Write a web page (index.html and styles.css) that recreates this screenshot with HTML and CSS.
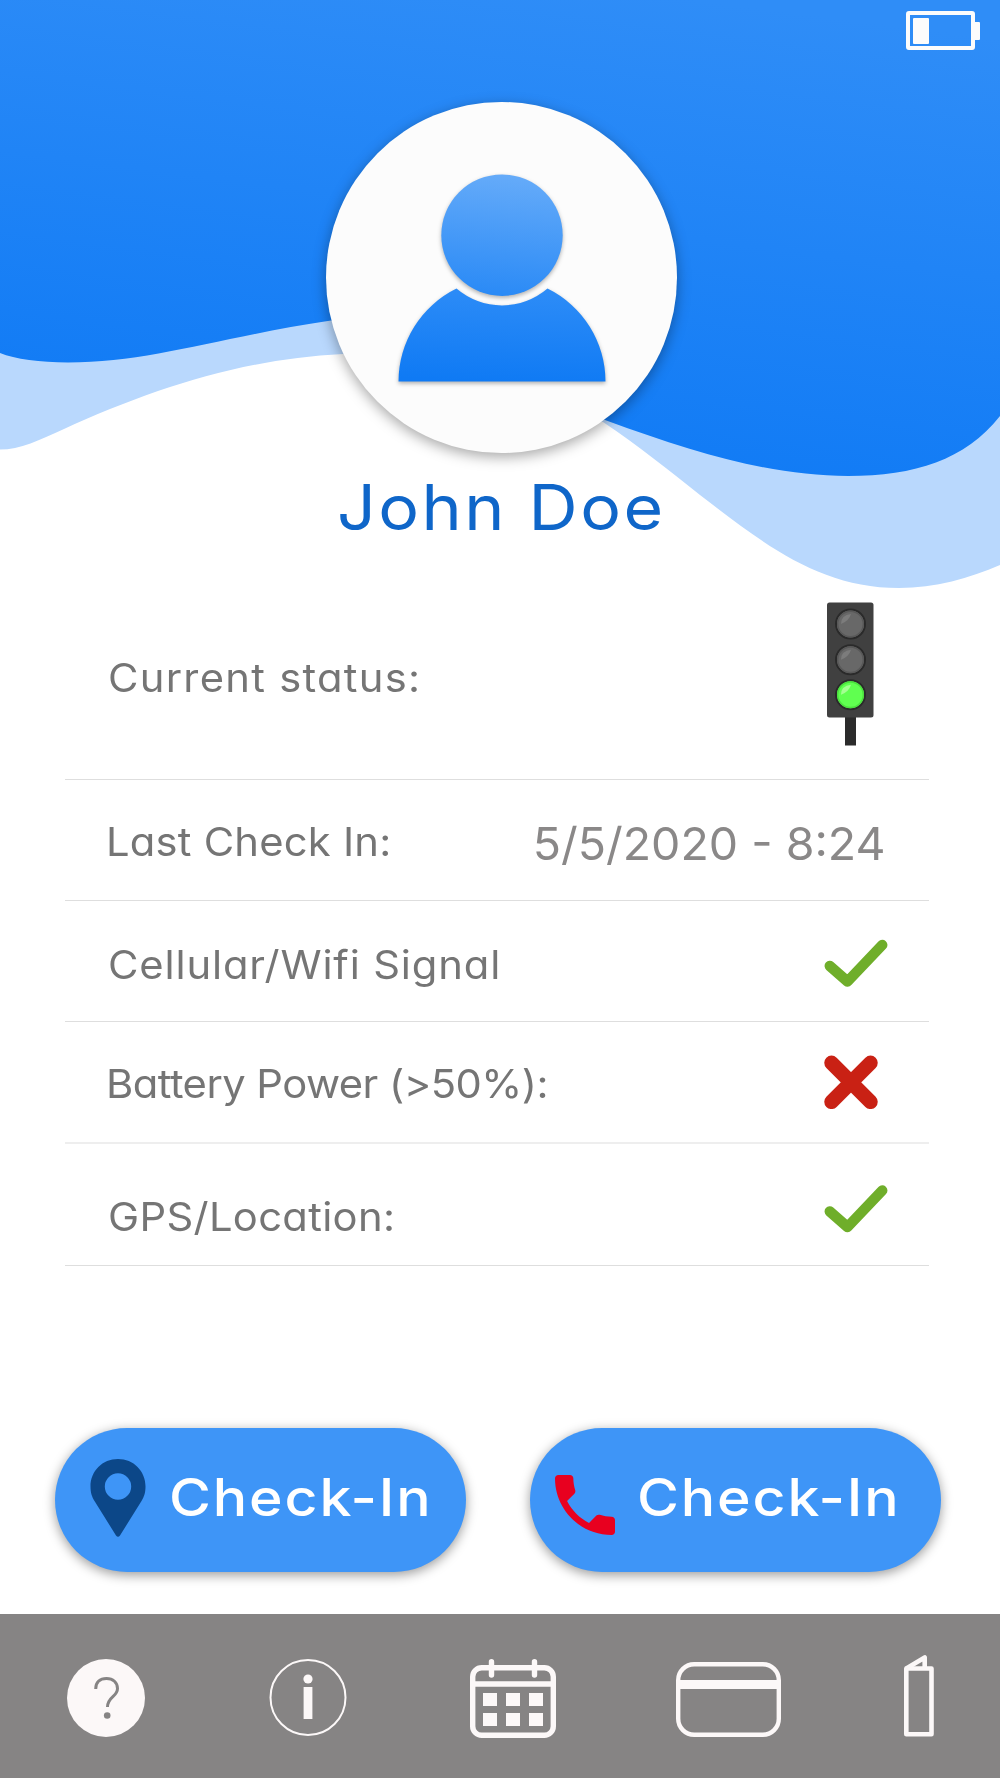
FILE: index.html
```html
<!DOCTYPE html>
<html lang="en">
<head>
  <meta charset="UTF-8">
  <title>Check-In</title>
  <meta name="viewport" content="width=device-width, initial-scale=1.0">
  <link rel="stylesheet" href="styles.css">
</head>
<body>

  <header class="hero">
    <svg class="waves" viewBox="0 0 1000 600" width="1000" height="600">
      <defs>
        <linearGradient id="sky" gradientUnits="userSpaceOnUse" x1="540" y1="-20" x2="480" y2="450">
          <stop offset="0" stop-color="#2f8df7"/>
          <stop offset="1" stop-color="#117bf5"/>
        </linearGradient>
      </defs>
      <path fill="#b9d8fd" d="M0 300V449.600C20 449.600 40 440 64 429C150 390 240 359 343 354L603 422C640 447 670 471 700 495C765 545 820 588 899 588C935 588 970 578 1000 565V300Z"/>
      <path fill="url(#sky)" d="M0 0H1000V416C965 460 915 476 848 476C775 476 700 455 605 420L331 320.500C220 337 150 362.500 68 362.500C40 362.500 15 359 0 353Z"/>
    </svg>

    <svg class="battery" viewBox="0 0 74 39" width="74" height="39">
      <rect x="2" y="2" width="65" height="35" rx="1" fill="none" stroke="#fcfcfc" stroke-width="4"/>
      <rect x="7" y="7" width="16" height="26" rx="1" fill="#fcfcfc"/>
      <rect x="68" y="11" width="6" height="18" rx="1" fill="#fcfcfc"/>
    </svg>

    <div class="avatar">
      <svg class="person" viewBox="0 0 208 208" width="208" height="208">
        <defs>
          <linearGradient id="head" x1="0.55" y1="0" x2="0.45" y2="1">
            <stop offset="0" stop-color="#65abf9"/>
            <stop offset="1" stop-color="#2a8af6"/>
          </linearGradient>
          <linearGradient id="torso" x1="0.55" y1="0" x2="0.45" y2="1">
            <stop offset="0" stop-color="#2d8cf7"/>
            <stop offset="1" stop-color="#0f7af4"/>
          </linearGradient>
        </defs>
        <path fill="url(#torso)" d="M0.500 207.500A103.500 103.500 0 0 1 58.500 114.600A70 70 0 0 0 149.500 114.600A103.500 103.500 0 0 1 207.500 207.500Z"/>
        <circle fill="url(#head)" cx="104" cy="61.200" r="60.700"/>
      </svg>
    </div>

    <h1 class="name">John Doe</h1>
  </header>

  <main>
    <ul class="status-list">
      <li class="row row-status">
        <span class="label">Current status:</span>
        <svg class="traffic" viewBox="0 0 47 144" width="47" height="144">
          <rect x="18" y="112" width="11" height="31.500" fill="#2b2b2b"/>
          <rect x="0" y="0.500" width="46.500" height="115" rx="2.500" fill="#404040"/>
          <g fill="#686868" stroke="#2a2a2a" stroke-width="2">
            <circle cx="23.500" cy="22" r="14.500"/>
            <circle cx="23.500" cy="57.700" r="14.500"/>
            <circle cx="23.500" cy="92.700" r="14.500" fill="#60ff50"/>
          </g>
          <g fill="none" stroke="#585858" stroke-width="1.500">
            <circle cx="23.500" cy="22" r="12.800"/>
            <circle cx="23.500" cy="57.700" r="12.800"/>
            <circle cx="23.500" cy="92.700" r="12.800" stroke="#4be03e"/>
          </g>
          <g fill="#7c7c7c">
            <path d="M14 22Q14 13 24 12Q22 19 14 22Z"/>
            <path d="M14 57.700Q14 48.700 24 47.700Q22 54.700 14 57.700Z"/>
            <path fill="#a4ff92" d="M14 92.700Q14 83.700 24 82.700Q22 89.700 14 92.700Z"/>
          </g>
        </svg>
      </li>
      <li class="row row-checkin">
        <span class="label">Last Check In:</span>
        <span class="date">5/5/2020 - 8:24</span>
      </li>
      <li class="row row-signal">
        <span class="label">Cellular/Wifi Signal</span>
        <svg class="check" viewBox="0 0 64 48" width="64" height="48">
          <path d="M5.800 27L23.500 42.500L58.200 6"/>
        </svg>
      </li>
      <li class="row row-battery">
        <span class="label">Battery Power (&gt;50%):</span>
        <svg class="cross" viewBox="0 0 54 54" width="54" height="54">
          <path d="M7.500 7.800L46.500 46.800M46.500 7.800L7.500 46.800"/>
        </svg>
      </li>
      <li class="row row-gps">
        <span class="label">GPS/Location:</span>
        <svg class="check" viewBox="0 0 64 48" width="64" height="48">
          <path d="M5.800 26.500L23.500 42L58.200 5.500"/>
        </svg>
      </li>
    </ul>

    <div class="actions">
      <button class="btn btn-location">
        <svg viewBox="0 0 56 78" width="56" height="78">
          <path fill="#0c4788" fill-rule="evenodd" d="M28 0C12.500 0 0.500 12 0.500 27.500C0.500 34 2 38 4.500 42L26 76.500Q28 79 30 76.500L51.500 42C54 38 55.500 34 55.500 27.500C55.500 12 43.500 0 28 0ZM28 14.300A13.200 13.200 0 1 1 28 40.700A13.200 13.200 0 1 1 28 14.300Z"/>
        </svg>
        <span>Check-In</span>
      </button>
      <button class="btn btn-call">
        <svg viewBox="3 3 18 18" width="60" height="60">
          <path fill="#e8001f" d="M6.620 10.790c1.440 2.830 3.760 5.140 6.590 6.590l2.200-2.200c.27-.27.67-.36 1.020-.24 1.120.37 2.330.57 3.570.57.550 0 1 .45 1 1V20c0 .55-.45 1-1 1-9.390 0-17-7.610-17-17 0-.55.45-1 1-1h3.500c.55 0 1 .45 1 1 0 1.250.2 2.450.57 3.570.11.350.03.740-.25 1.020l-2.200 2.200z"/>
        </svg>
        <span>Check-In</span>
      </button>
    </div>
  </main>

  <nav class="tabbar">
    <a class="tab tab-help">
      <svg viewBox="0 0 78 78" width="78" height="78">
        <circle cx="39" cy="39" r="39" fill="#fcf8f8"/>
        <path d="M28.700 30C28.700 23 33 19.500 39.500 19.500C46 19.500 50.500 23.500 50.500 29.500C50.500 38 40.500 37.500 40.500 48" fill="none" stroke="#868484" stroke-width="3"/>
        <circle cx="40.200" cy="56.500" r="3.300" fill="#868484"/>
      </svg>
    </a>
    <a class="tab tab-info">
      <svg viewBox="0 0 78 78" width="78" height="78">
        <circle cx="39" cy="38.500" r="37.500" fill="none" stroke="#fcf8f8" stroke-width="2"/>
        <circle cx="39" cy="20" r="4.600" fill="#fcf8f8"/>
        <rect x="34.600" y="28" width="8.800" height="32" fill="#fcf8f8"/>
      </svg>
    </a>
    <a class="tab tab-calendar">
      <svg viewBox="0 0 86 79" width="86" height="79">
        <g fill="none" stroke="#fcf8f8" stroke-width="5.400">
          <rect x="2.700" y="8.700" width="80.600" height="67.600" rx="9"/>
          <path d="M3 25H83"/>
          <path d="M21.500 2.700V16M64.500 2.700V16" stroke-linecap="round"/>
        </g>
        <g fill="#fcf8f8">
          <rect x="13" y="34" width="14" height="13"/>
          <rect x="36" y="34" width="14" height="13"/>
          <rect x="59" y="34" width="14" height="13"/>
          <rect x="13" y="54" width="14" height="13"/>
          <rect x="36" y="54" width="14" height="13"/>
          <rect x="59" y="54" width="14" height="13"/>
        </g>
      </svg>
    </a>
    <a class="tab tab-card">
      <svg viewBox="0 0 105 75" width="105" height="75">
        <rect x="2.200" y="2.200" width="100.600" height="70.600" rx="16" fill="none" stroke="#fcf8f8" stroke-width="4.400"/>
        <rect x="3" y="18" width="99" height="9" fill="#fcf8f8"/>
      </svg>
    </a>
    <a class="tab tab-brochure">
      <svg viewBox="0 0 30 82" width="30" height="82">
        <g fill="none" stroke="#fcf8f8" stroke-width="4.600" stroke-linejoin="round">
          <rect x="2.300" y="13.500" width="25.200" height="65.800"/>
          <path d="M2.300 13.500L20.700 2.500V13.500"/>
        </g>
      </svg>
    </a>
  </nav>

</body>
</html>
```
FILE: styles.css
```css
* {
  box-sizing: border-box;
}

body {
  margin: 0;
  width: 1000px;
  background-color: #ffffff;
  font-family: Inter, "Open Sans", sans-serif;
  font-feature-settings: "cv11" 1;
}

svg {
  display: block;
  flex: none;
}

/* header */
.hero {
  position: relative;
  height: 590px;
  padding-top: 102px;
}

.waves {
  position: absolute;
  top: 0;
  left: 0;
}

.battery {
  position: absolute;
  top: 11px;
  right: 20px;
}

.avatar {
  position: relative;
  width: 351px;
  height: 351px;
  margin-left: 326px;
  padding: 72px 0 0 72px;
  border-radius: 50%;
  background-color: #fcfcfc;
  box-shadow: 0 4px 14px rgba(0, 0, 0, 0.35);
}

.person {
  filter: drop-shadow(0 2px 2px rgba(0, 0, 0, 0.3));
}

.name {
  position: relative;
  width: fit-content;
  margin: 14px 0 0 337px;
  font-size: 63px;
  font-weight: 440;
  line-height: 80px;
  letter-spacing: 2.3px;
  color: #0f66c9;
  white-space: nowrap;
  transform: scaleX(1.08);
  transform-origin: left;
}

/* status rows */
.status-list {
  list-style: none;
  margin: 0 71px 0 65px;
  padding: 0;
}

.row {
  display: flex;
  align-items: flex-start;
  justify-content: space-between;
  height: 121px;
  padding: 38px 41px 0 43px;
  border-bottom: 1px solid #dedede;
}

.label {
  font-size: 39px;
  line-height: 48px;
  letter-spacing: 1.2px;
  color: #757575;
  white-space: nowrap;
  transform: scaleX(1.07);
  transform-origin: left;
}

.date {
  font-size: 45px;
  line-height: 52px;
  color: #8a8888;
  white-space: nowrap;
  transform: scaleX(1.033);
  transform-origin: right;
}

.row-status {
  height: 190px;
  padding: 12px 55px 0 43px;
}

.row-status .label {
  margin-top: 52px;
}

.row-checkin {
  padding-left: 41px;
  padding-right: 44px;
}

.row-checkin .label {
  letter-spacing: 0.2px;
}

.row-signal .label {
  margin-top: 2px;
  letter-spacing: 0.8px;
}

.row-battery {
  height: 122px;
  padding: 33px 51px 0 41px;
  border-bottom: 2px solid #eeeeee;
}

.row-battery .label {
  margin-top: 5px;
  letter-spacing: -0.5px;
}

.row-gps {
  height: 122px;
  padding-top: 41px;
}

.row-gps .label {
  margin-top: 8px;
  letter-spacing: 0.3px;
}

.check path {
  fill: none;
  stroke: #6fae2a;
  stroke-width: 10.5;
  stroke-linecap: round;
  stroke-linejoin: round;
}

.cross path {
  stroke: #c92114;
  stroke-width: 14.5;
  stroke-linecap: round;
}

/* buttons */
.actions {
  display: flex;
  gap: 64px;
  margin: 162px 0 0 55px;
}

.btn {
  display: flex;
  align-items: flex-start;
  width: 411px;
  height: 144px;
  padding: 0;
  border: none;
  border-radius: 72px;
  background-color: #3e95f7;
  box-shadow: 0 3px 12px rgba(0, 0, 0, 0.4);
  color: #ffffff;
  font: inherit;
}

.btn span {
  margin-top: 37px;
  font-size: 52px;
  font-weight: 450;
  line-height: 66px;
  letter-spacing: 1.7px;
  white-space: nowrap;
  transform: scaleX(1.1);
  transform-origin: left;
}

.btn svg {
  margin-top: 31px;
}

.btn-location svg {
  margin-left: 35px;
  margin-right: 23px;
}

.btn-call svg {
  margin-top: 47px;
  margin-left: 25px;
  margin-right: 22px;
}

/* bottom bar */
.tabbar {
  display: flex;
  align-items: flex-start;
  height: 165px;
  margin-top: 42px;
  padding: 45px 0 0 67px;
  background-color: #868484;
}

.tab-info {
  margin-left: 124px;
}

.tab-calendar {
  margin-left: 123px;
}

.tab-card {
  margin: 3px 0 0 120px;
}

.tab-brochure {
  margin: -4px 0 0 123px;
}
```
